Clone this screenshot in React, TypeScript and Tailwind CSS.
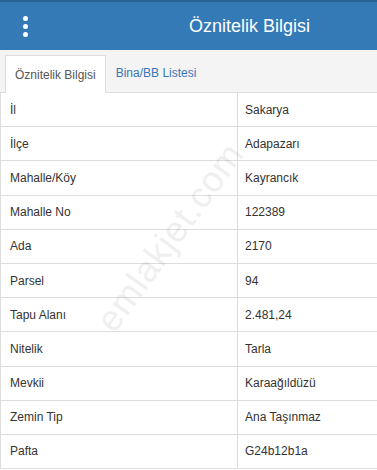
import React from "react";

const rows: [string, string][] = [
  ["İl", "Sakarya"],
  ["İlçe", "Adapazarı"],
  ["Mahalle/Köy", "Kayrancık"],
  ["Mahalle No", "122389"],
  ["Ada", "2170"],
  ["Parsel", "94"],
  ["Tapu Alanı", "2.481,24"],
  ["Nitelik", "Tarla"],
  ["Mevkii", "Karaağıldüzü"],
  ["Zemin Tip", "Ana Taşınmaz"],
  ["Pafta", "G24b12b1a"],
];

const App = () => {
  return (
    <div className="relative w-[377px] h-[470px] overflow-hidden bg-white font-['Liberation_Sans',Arial,sans-serif] text-[#333]">
      {/* Header */}
      <div className="flex items-center h-[50px] bg-[#337ab7] border-t-2 border-[#2a6496]">
        <div className="flex flex-col gap-[3px] items-center w-[50px]">
          <span className="block w-[5px] h-[5px] rounded-full bg-white" />
          <span className="block w-[5px] h-[5px] rounded-full bg-white" />
          <span className="block w-[5px] h-[5px] rounded-full bg-white" />
        </div>
        <div className="flex-1 text-center pl-[76px] pr-[4px] text-white text-[18px]">Öznitelik Bilgisi</div>
      </div>

      {/* Tabs */}
      <div className="flex items-end h-[43px] bg-[#f4f4f4] pl-[5px] border-b border-[#ddd]">
        <div className="h-[38px] px-[9px] flex items-center bg-white border border-b-0 border-[#ddd] text-[12px] text-[#555] -mb-px">
          Öznitelik Bilgisi
        </div>
        <div className="h-[38px] px-[10px] flex items-center text-[12px] text-[#3a78b5]">Bina/BB Listesi</div>
      </div>

      {/* Table */}
      <div className="border-l border-[#ddd]">
        {rows.map(([k, v]) => (
          <div key={k} className="flex h-[34.2px] border-b border-[#ddd] text-[12px]">
            <div className="w-[237px] flex items-center pl-[9px] border-r border-[#ddd]">{k}</div>
            <div className="flex-1 flex items-center pl-[7px]">{v}</div>
          </div>
        ))}
      </div>

      {/* Watermark */}
      <div className="pointer-events-none absolute left-[30px] top-[210px] w-[280px] text-center -rotate-[54deg] text-[36px] text-[#000] opacity-[0.06] tracking-wide">
        emlakjet.com
      </div>
    </div>
  );
};

export default App;
